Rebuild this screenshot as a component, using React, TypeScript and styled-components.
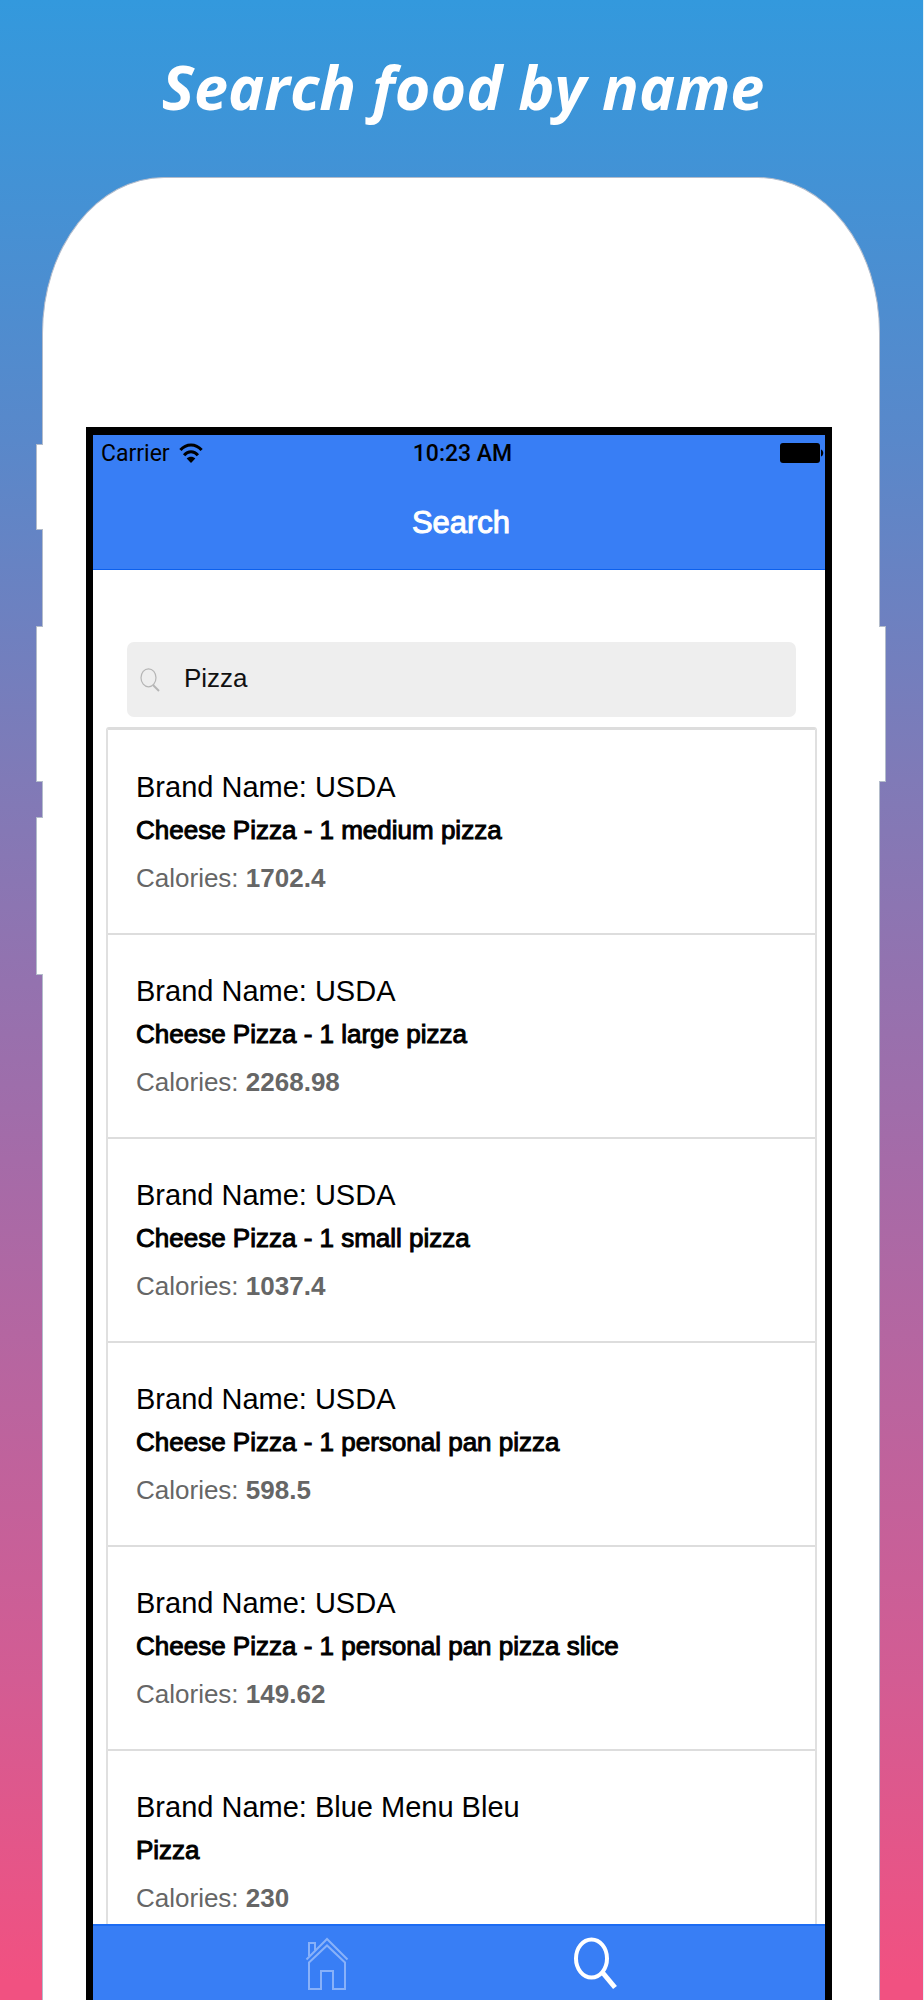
import React, { useState } from "react";
import styled, { createGlobalStyle } from "styled-components";

const GlobalStyle = createGlobalStyle`
  *, *::before, *::after { box-sizing: border-box; }
  html, body { margin: 0; padding: 0; background: #fff; }
  body { font-family: "Liberation Sans", Arial, sans-serif; color: #000; }
  h1, h2, h3, p, ul { margin: 0; padding: 0; }
`;

const Page = styled.div`
  display: flex;
  flex-direction: column;
  height: 100vh;
  overflow: hidden;
  padding: 0 43px 0 42px;
  border-right: 1px solid #e4f2f8;
  background: linear-gradient(180deg, #3399dd 0%, #5988ca 22%, #807ab7 39%, #a56ba8 58%, #d35c93 84%, #f15181 99%);
`;

const Headline = styled.h1`
  height: 177px;
  flex: none;
  padding-left: 4px;
  color: #fff;
  text-align: center;
  font: italic 700 61px/174px "Open Sans", "Noto Sans", sans-serif;
  white-space: nowrap;
`;

const Phone = styled.div`
  position: relative;
  flex: 1;
  min-height: 0;
  display: flex;
  padding: 249px 47px 0 43px;
  background: #fff;
  border: 1px solid #b3bccb;
  border-bottom: 0;
  border-radius: 122px 122px 0 0 / 156px 156px 0 0;
`;

const SideKey = styled.span<{ $side: "left" | "right"; $top: number; $length: number }>`
  position: absolute;
  ${(p) => p.$side}: -7px;
  top: ${(p) => p.$top}px;
  width: 7px;
  height: ${(p) => p.$length}px;
  background: #fff;
  border: 1px solid #b3bccb;
  border-${(p) => p.$side === "left" ? "right" : "left"}: 0;
`;

const Screen = styled.main`
  flex: 1;
  min-width: 0;
  display: flex;
  flex-direction: column;
  border: 7px solid #000;
  border-top-width: 8px;
  border-bottom: 0;
  background: #fff;
`;

const AppHeader = styled.header`
  flex: none;
  padding-left: 4px;
  background: #387ef5;
  border-bottom: 1px solid #0c60ee;
`;

const StatusBar = styled.div`
  display: grid;
  grid-template-columns: 1fr auto 1fr;
  align-items: center;
  height: 36px;
  padding: 0 1px 0 4px;
  font: 400 23px/38px Roboto, "Liberation Sans", sans-serif;
`;

const Carrier = styled.span`
  display: flex;
  align-items: center;
  gap: 9px;
`;

const Clock = styled.time`
  font-weight: 500;
`;

const BatteryIcon = styled.svg`
  justify-self: end;
`;

const ScreenTitle = styled.h2`
  height: 98px;
  color: #fff;
  text-align: center;
  font-size: 31px;
  line-height: 104px;
  font-weight: 400;
  -webkit-text-stroke: 1px currentColor;
`;

const Content = styled.div`
  flex: 1;
  min-height: 0;
  overflow: hidden;
  padding: 72px 8px 0 13px;
`;

const SearchField = styled.label`
  display: flex;
  align-items: center;
  gap: 24px;
  height: 75px;
  margin: 0 21px 10px;
  padding: 0 13px;
  border-radius: 7px;
  background: #eee;
`;

const SearchInput = styled.input`
  flex: 1;
  min-width: 0;
  height: 100%;
  padding: 0 0 2px;
  border: 0;
  outline: 0;
  background: transparent;
  color: #111;
  font: 400 26px "Liberation Sans", Arial, sans-serif;
`;

const Results = styled.ul`
  list-style: none;
  padding-top: 1px;
  border: 2px solid #e0e0e0;
  border-top: 3px solid #ddd;
  border-radius: 3px;
`;

const FoodItem = styled.li`
  height: 204px;
  padding: 34px 28px 0;
  border-bottom: 2px solid #ddd;
`;

const Brand = styled.p`
  font-size: 29px;
  line-height: 44px;
`;

const FoodName = styled.h3`
  font-size: 26px;
  line-height: 42px;
  font-weight: 400;
  -webkit-text-stroke: 1px currentColor;
`;

const Calories = styled.p`
  margin-top: 6px;
  color: #666;
  font-size: 26px;
  line-height: 42px;
`;

const TabBar = styled.nav`
  flex: none;
  display: flex;
  justify-content: center;
  height: 76px;
  padding-left: 4px;
  background: #387ef5;
  border-top: 2px solid #1c6cf3;
`;

const Tab = styled.button<{ $active: boolean }>`
  flex: 0 1 268px;
  display: flex;
  justify-content: center;
  padding: 11px 0 0;
  border: 0;
  background: none;
  color: #fff;
  opacity: ${(p) => (p.$active ? 1 : 0.4)};
  cursor: pointer;
`;

const foods = [
  { brand: "USDA", name: "Cheese Pizza - 1 medium pizza", calories: "1702.4" },
  { brand: "USDA", name: "Cheese Pizza - 1 large pizza", calories: "2268.98" },
  { brand: "USDA", name: "Cheese Pizza - 1 small pizza", calories: "1037.4" },
  { brand: "USDA", name: "Cheese Pizza - 1 personal pan pizza", calories: "598.5" },
  { brand: "USDA", name: "Cheese Pizza - 1 personal pan pizza slice", calories: "149.62" },
  { brand: "Blue Menu Bleu", name: "Pizza", calories: "230" },
];

const WifiIcon = () => (
  <svg width="24" height="22" viewBox="0 0 24 22" aria-hidden="true">
    <path d="M1.4 7C7.2 .2 16.8 .2 22.6 7" fill="none" stroke="#000" strokeWidth="3" />
    <path d="M5.1 12.2C9 7.7 15 7.7 18.9 12.2" fill="none" stroke="#000" strokeWidth="3" />
    <path d="M12 20L7.7 15.500C10 13 14 13 16.300 15.500Z" />
  </svg>
);

const FieldSearchIcon = () => (
  <svg width="20" height="24" viewBox="0 0 20 24" fill="none" stroke="#b5b5b5" aria-hidden="true">
    <ellipse cx="8.5" cy="9.8" rx="7.5" ry="9" strokeWidth="1.2" />
    <path d="M13 17l6 6" strokeWidth="2" />
  </svg>
);

const HomeIcon = () => (
  <svg width="44" height="54" viewBox="0 0 44 54" fill="none" stroke="currentColor" strokeWidth="2" aria-hidden="true">
    <path d="M1.5 22.5L22 2l20.5 20.5" />
    <path d="M4 25.500L22 8.500l18 17V52H28V34H16v18H4Z" />
    <path d="M4 19V6h6v7" />
  </svg>
);

const SearchIcon = () => (
  <svg width="44" height="54" viewBox="0 0 44 54" fill="none" stroke="currentColor" aria-hidden="true">
    <ellipse cx="18.5" cy="21.500" rx="15.500" ry="19" strokeWidth="4" />
    <path d="M29.500 35.500L42 50.500" strokeWidth="5" />
  </svg>
);

export default function App() {
  const [query, setQuery] = useState("Pizza");
  const [tab, setTab] = useState("search");
  return (
    <>
      <GlobalStyle />
      <Page>
        <Headline>Search food by name</Headline>
        <Phone>
          <SideKey $side="left" $top={266} $length={86} />
          <SideKey $side="left" $top={448} $length={156} />
          <SideKey $side="left" $top={639} $length={158} />
          <SideKey $side="right" $top={448} $length={156} />
          <Screen>
            <AppHeader>
              <StatusBar>
                <Carrier>Carrier <WifiIcon /></Carrier>
                <Clock>10:23 AM</Clock>
                <BatteryIcon width="44" height="22" viewBox="0 0 44 22" aria-label="Battery full">
                  <rect x="0" y="0" width="40" height="20" rx="3" />
                  <path d="M41 6.500c3 1 3 6 0 7Z" />
                </BatteryIcon>
              </StatusBar>
              <ScreenTitle>Search</ScreenTitle>
            </AppHeader>
            <Content>
              <SearchField>
                <FieldSearchIcon />
                <SearchInput type="text" aria-label="Search food" value={query} onChange={(e) => setQuery(e.target.value)} />
              </SearchField>
              <Results>
                {foods.map((food) => (
                  <FoodItem key={food.brand + food.name}>
                    <Brand>Brand Name: {food.brand}</Brand>
                    <FoodName>{food.name}</FoodName>
                    <Calories>Calories: <strong>{food.calories}</strong></Calories>
                  </FoodItem>
                ))}
              </Results>
            </Content>
            <TabBar>
              <Tab type="button" aria-label="Home" $active={tab === "home"} onClick={() => setTab("home")}><HomeIcon /></Tab>
              <Tab type="button" aria-label="Search" $active={tab === "search"} onClick={() => setTab("search")}><SearchIcon /></Tab>
            </TabBar>
          </Screen>
        </Phone>
      </Page>
    </>
  );
}
